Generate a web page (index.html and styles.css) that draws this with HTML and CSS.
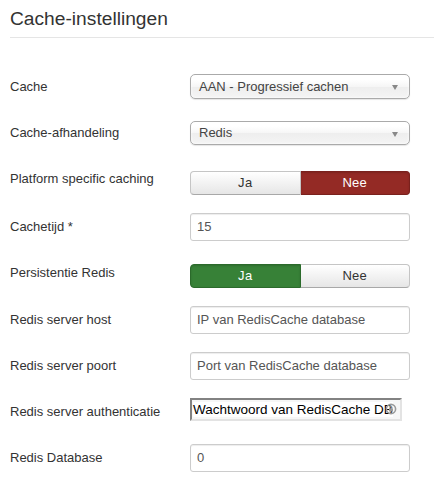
FILE: index.html
```html
<!DOCTYPE html>
<html lang="nl">
<head>
<meta charset="utf-8">
<title>Cache-instellingen</title>
<link rel="stylesheet" href="styles.css">
</head>
<body>
<div class="page">
  <h2 class="title">Cache-instellingen</h2>
  <div class="form">
    <div class="row">
      <label class="label">Cache</label>
      <div class="select select-first">AAN - Progressief cachen<span class="arrow"></span></div>
    </div>
    <div class="row">
      <label class="label">Cache-afhandeling</label>
      <div class="select select-second">Redis<span class="arrow"></span></div>
    </div>
    <div class="row">
      <label class="label">Platform specific caching</label>
      <div class="toggle">
        <span class="btn btn-left">Ja</span>
        <span class="btn btn-right btn-danger">Nee</span>
      </div>
    </div>
    <div class="row">
      <label class="label">Cachetijd *</label>
      <div class="input">15</div>
    </div>
    <div class="row">
      <label class="label">Persistentie Redis</label>
      <div class="toggle toggle-b">
        <span class="btn btn-left btn-success">Ja</span>
        <span class="btn btn-right">Nee</span>
      </div>
    </div>
    <div class="row">
      <label class="label">Redis server host</label>
      <div class="input">IP van RedisCache database</div>
    </div>
    <div class="row">
      <label class="label">Redis server poort</label>
      <div class="input">Port van RedisCache database</div>
    </div>
    <div class="row">
      <label class="label">Redis server authenticatie</label>
      <div class="pwd">
        <span class="pwd-text">Wachtwoord van RedisCache DB</span>
        <svg class="pwd-icon" width="12" height="12" viewBox="0 0 12 12">
          <circle cx="6" cy="6" r="4.6" fill="none" stroke="#9a9a9a" stroke-width="1.6"/>
          <rect x="4" y="5.2" width="4" height="3.2" rx="0.5" fill="#9a9a9a"/>
          <path d="M4.8 5.3 V4.4 a1.2 1.2 0 0 1 2.4 0 V5.3" fill="none" stroke="#9a9a9a" stroke-width="0.9"/>
        </svg>
      </div>
    </div>
    <div class="row">
      <label class="label">Redis Database</label>
      <div class="input">0</div>
    </div>
  </div>
</div>
</body>
</html>
```
FILE: styles.css
```css
html, body {
  margin: 0;
  padding: 0;
  background: #fff;
}
body {
  font-family: "Liberation Sans", Arial, sans-serif;
  font-size: 13px;
  color: #333;
  overflow: hidden;
}
.page {
  padding-left: 10px;
}
.title {
  margin: 0;
  padding-top: 8px;
  font-size: 19.2px;
  font-weight: normal;
  line-height: 22px;
  color: #333;
  height: 29px;
  border-bottom: 1px solid #e5e5e5;
}
.form {
  padding-top: 35px;
}
.row {
  display: flex;
  align-items: flex-start;
  margin-bottom: 18px;
}
.label {
  width: 180px;
  flex: none;
  box-sizing: border-box;
  height: 28px;
  padding-top: 5px;
  line-height: 18px;
  color: #333;
}
.select {
  position: relative;
  box-sizing: border-box;
  width: 220px;
  height: 25px;
  border: 1px solid #aaa;
  border-radius: 5px;
  background: linear-gradient(#fff 20%, #f6f6f6 50%, #eee 52%, #f4f4f4 100%);
  box-shadow: inset 0 0 3px #fff, 0 1px 1px rgba(0,0,0,0.1);
  padding-left: 8px;
  line-height: 23px;
  color: #444;
}
.select-first { margin-top: 1px; }
.select-second { margin-top: 2px; height: 24px; line-height: 22px; }
.arrow {
  position: absolute;
  right: 11px;
  top: 10px;
  width: 0;
  height: 0;
  border-left: 3.5px solid transparent;
  border-right: 3.5px solid transparent;
  border-top: 5px solid #888;
}
.toggle {
  display: flex;
  width: 220px;
  height: 24px;
  margin-top: 6px;
}
.toggle-b { margin-top: 5px; }
.btn {
  flex: 1;
  box-sizing: border-box;
  border: 1px solid #c5c5c5;
  border-bottom-color: #a8a8a8;
  background: linear-gradient(#fff, #e6e6e6);
  text-align: center;
  line-height: 22px;
  color: #333;
  letter-spacing: 0.3px;
}
.btn-left { border-radius: 4px 0 0 4px; }
.btn-right { border-radius: 0 4px 4px 0; border-left: 0; }
.btn-danger {
  background: #942a25;
  border-color: #7a211d;
  color: #fff;
  box-shadow: inset 0 1px 2px rgba(0,0,0,0.15);
}
.btn-success {
  background: #378137;
  border-color: #2b6a2b;
  color: #fff;
  box-shadow: inset 0 1px 2px rgba(0,0,0,0.15);
}
.input {
  box-sizing: border-box;
  width: 220px;
  height: 28px;
  border: 1px solid #ccc;
  border-radius: 3px;
  box-shadow: inset 0 1px 1px rgba(0,0,0,0.075);
  padding: 0 6px;
  line-height: 26px;
  color: #555;
  background: #fff;
}
.pwd {
  position: relative;
  box-sizing: border-box;
  width: 212px;
  height: 23px;
  border: 2px solid;
  border-color: #828282 #e3e3e3 #e3e3e3 #828282;
  background: #f7f7f7;
  padding-left: 1px;
  line-height: 19px;
  color: #000;
  font-size: 13.5px;
  white-space: nowrap;
  overflow: hidden;
}
.pwd-text {
  background: #fff;
}
.pwd-icon {
  position: absolute;
  right: 3px;
  top: 3px;
}
```
